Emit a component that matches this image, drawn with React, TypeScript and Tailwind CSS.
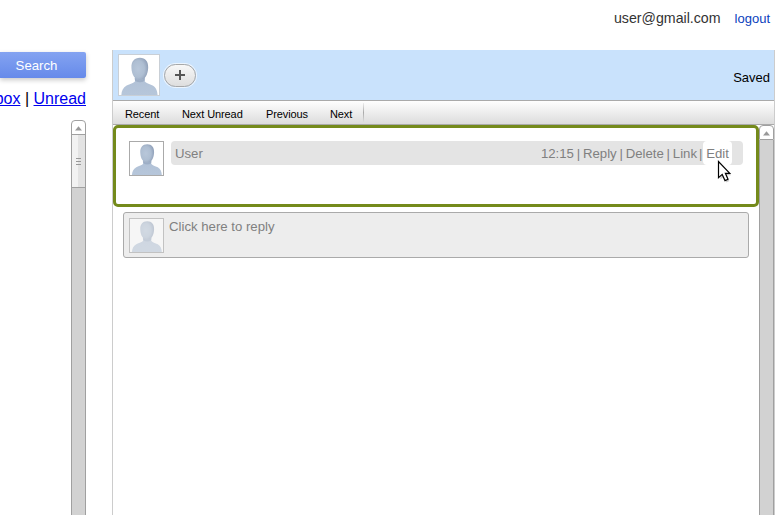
import React from "react";

function Avatar({ size, id, className = "" }: { size: number; id: string; className?: string }) {
  return (
    <svg width={size} height={size} viewBox="0 0 34 34" className={"block " + className}>
      <defs>
        <linearGradient id={id + "b"} x1="0" y1="0" x2="0" y2="1">
          <stop offset="0" stopColor="#a3b3ca" />
          <stop offset="0.35" stopColor="#b2c2d7" />
          <stop offset="1" stopColor="#b6c6da" />
        </linearGradient>
        <radialGradient id={id + "h"} cx="0.4" cy="0.5" r="0.62">
          <stop offset="0" stopColor="#b8c7da" />
          <stop offset="0.6" stopColor="#aebed2" />
          <stop offset="1" stopColor="#8f9fb8" />
        </radialGradient>
      </defs>
      <rect width="34" height="34" fill="#fff" />
      <path
        d="M2 34C2.2 30.5 3.4 27.6 6.5 25.9C9.3 24.5 12.6 24 13.6 22.3L13.6 17H21.8L21.8 22.3C22.8 24 26 24.6 28.6 25.9C31.6 27.5 32.6 30.5 32.8 34Z"
        fill={`url(#${id}b)`}
      />
      <path d="M13.2 19.3Q17.8 23.6 22.2 19.3L21.8 21.8Q18 24.6 13.6 21.8Z" fill="#95a6bf" opacity="0.7" />
      <path
        d="M17.8 2.4C22.4 2.4 25 5.6 24.8 10.8C24.6 16.6 22 21.3 17.8 21.3C13.6 21.3 10.8 16.8 10.6 11C10.4 5.6 13 2.4 17.8 2.4Z"
        fill={`url(#${id}h)`}
      />
    </svg>
  );
}

function ArrowButton() {
  return (
    <div className="flex h-[15px] shrink-0 items-center justify-center rounded-t-[4px] border border-[#a0a0a0] bg-white">
      <svg width="7" height="5" viewBox="0 0 7 5" className="mt-px block">
        <path d="M3.5 0.3L7 4.6H0Z" fill="#999" />
      </svg>
    </div>
  );
}

function Separator() {
  return <span className="w-[9px] text-center">|</span>;
}

export default function App() {
  return (
    <div className="relative flex h-[515px] w-[775px] flex-col overflow-hidden bg-white font-['Liberation_Sans',Arial,sans-serif] text-[13px] text-black">
      <header className="flex h-[50px] shrink-0 items-start justify-end pt-[10px] pr-[5px] leading-4">
        <span className="mr-[14px] text-[14.2px] text-[#333]">user@gmail.com</span>
        <a className="mt-px text-[#0a3fbd]">logout</a>
      </header>

      <div className="flex min-h-0 flex-1">
        <aside className="flex w-[86px] shrink-0 flex-col items-end">
          <button className="mt-[2px] h-[26px] w-[86px] shrink-0 rounded-r-[2px] bg-linear-to-b from-[#84a3f1] to-[#668aea] pt-[2px] pr-[13px] text-center text-[13.2px] text-white shadow-[0_2px_5px_rgba(0,0,0,0.22)]">
            Search
          </button>
          <nav className="mt-[11px] h-[20px] text-[16px] leading-[20px] whitespace-nowrap">
            <a className="text-[#0000ee] underline">Inbox</a> | <a className="text-[#0000ee] underline">Unread</a>
          </nav>
          <div className="mt-[11px] flex w-[15px] flex-1 flex-col">
            <ArrowButton />
            <div className="-mt-px flex h-[54px] shrink-0 flex-col items-center justify-center gap-[2px] border border-[#a0a0a0] bg-linear-to-r from-[#f2f2f2] from-50% to-[#e3e3e3] to-50%">
              <i className="h-px w-[5px] bg-[#999]" />
              <i className="h-px w-[5px] bg-[#999]" />
              <i className="h-px w-[5px] bg-[#999]" />
            </div>
            <div className="flex-1 border-x border-[#a0a0a0] bg-[#d2d2d2]" />
          </div>
        </aside>

        <main className="ml-[26px] flex w-[663px] flex-col border-x border-[#ccc]">
          <div className="flex h-[50px] shrink-0 items-center bg-[#c9e2fc] pr-[4px] pl-[5px]">
            <div className="border border-[#c9cfd6]">
              <Avatar size={40} id="top" />
            </div>
            <button className="ml-[4px] flex h-[23px] w-[32px] items-center justify-center rounded-full border border-[#a8a8a8] bg-linear-to-b from-[#f8f8f8] to-[#dedede] shadow-[0_0_0_1px_rgba(255,255,255,0.65)]">
              <svg width="10" height="10" viewBox="0 0 10 10">
                <path d="M0 5H10M5 0V10" stroke="#555" strokeWidth="2" />
              </svg>
            </button>
            <span className="mt-[6px] ml-auto">Saved</span>
          </div>

          <div className="flex h-[25px] shrink-0 items-center border-t border-b border-[#aaa] bg-linear-to-b from-white to-[#dcdcdc] pl-[12px] text-[11px]">
            <span className="mt-[4px] w-[57px] tracking-[-0.1px]">Recent</span>
            <span className="mt-[4px] w-[84px] tracking-[-0.1px]">Next Unread</span>
            <span className="mt-[4px] w-[64px] tracking-[-0.1px]">Previous</span>
            <span className="mt-[4px] w-[33px] tracking-[-0.1px]">Next</span>
            <i className="h-[19px] w-px bg-linear-to-b from-[#eee] via-[#aaa] to-[#ddd]" />
          </div>

          <div className="flex min-h-0 flex-1">
            <section className="flex w-[646px] shrink-0 flex-col">
              <article className="flex h-[82px] shrink-0 items-start rounded-[5px] border-[3px] border-[#748a1b] pt-[13px] pr-[13px] pl-[13px]">
                <div className="border border-[#aaa]">
                  <Avatar size={33} id="msg" />
                </div>
                <div className="ml-[7px] flex h-[24px] flex-1 items-center rounded-[4px] bg-[#e4e4e4] pr-[11px] pl-[4px] text-[13.2px] leading-[22px] text-[#808080]">
                  <span className="mt-[2px] mr-auto">User</span>
                  <div className="mt-[2px] flex">
                    <span>12:15</span>
                    <Separator />
                    <a>Reply</a>
                    <Separator />
                    <a>Delete</a>
                    <Separator />
                    <a>Link</a>
                    <span className="w-[6px] pl-[2px] text-left">|</span>
                  </div>
                  <a className="flex h-[24px] w-[29px] items-center justify-center rounded-[4px] bg-white pt-[2px]">Edit</a>
                </div>
              </article>

              <div className="mt-[5px] ml-[10px] flex h-[46px] w-[626px] items-start rounded-[3px] border border-[#aaa] bg-[#ededed] pt-[5px] pl-[5px]">
                <div className="border border-[#999] opacity-50">
                  <Avatar size={33} id="reply" />
                </div>
                <span className="ml-[5px] text-[13.2px] leading-[18px] text-[#808080]">Click here to reply</span>
              </div>
            </section>
            <div className="flex flex-1 flex-col">
              <ArrowButton />
              <div className="flex-1 border-x border-[#a0a0a0] bg-[#d2d2d2]" />
            </div>
          </div>
        </main>
      </div>

      <svg className="absolute top-[160px] left-[717px]" width="17" height="25" viewBox="0 0 17 25">
        <path
          d="M2.4 2.2V18.2L5.8 15.2L8.4 21.2L11.3 19.9L8.8 14H13.2Z"
          transform="translate(1 1.2)"
          fill="#000"
          opacity="0.2"
        />
        <path
          d="M1.5 1.5V17.6L5.2 14.4L8 20.6L11 19.3L8.4 13.3H12.8Z"
          fill="#fff"
          stroke="#000"
          strokeWidth="1.2"
        />
      </svg>
    </div>
  );
}
